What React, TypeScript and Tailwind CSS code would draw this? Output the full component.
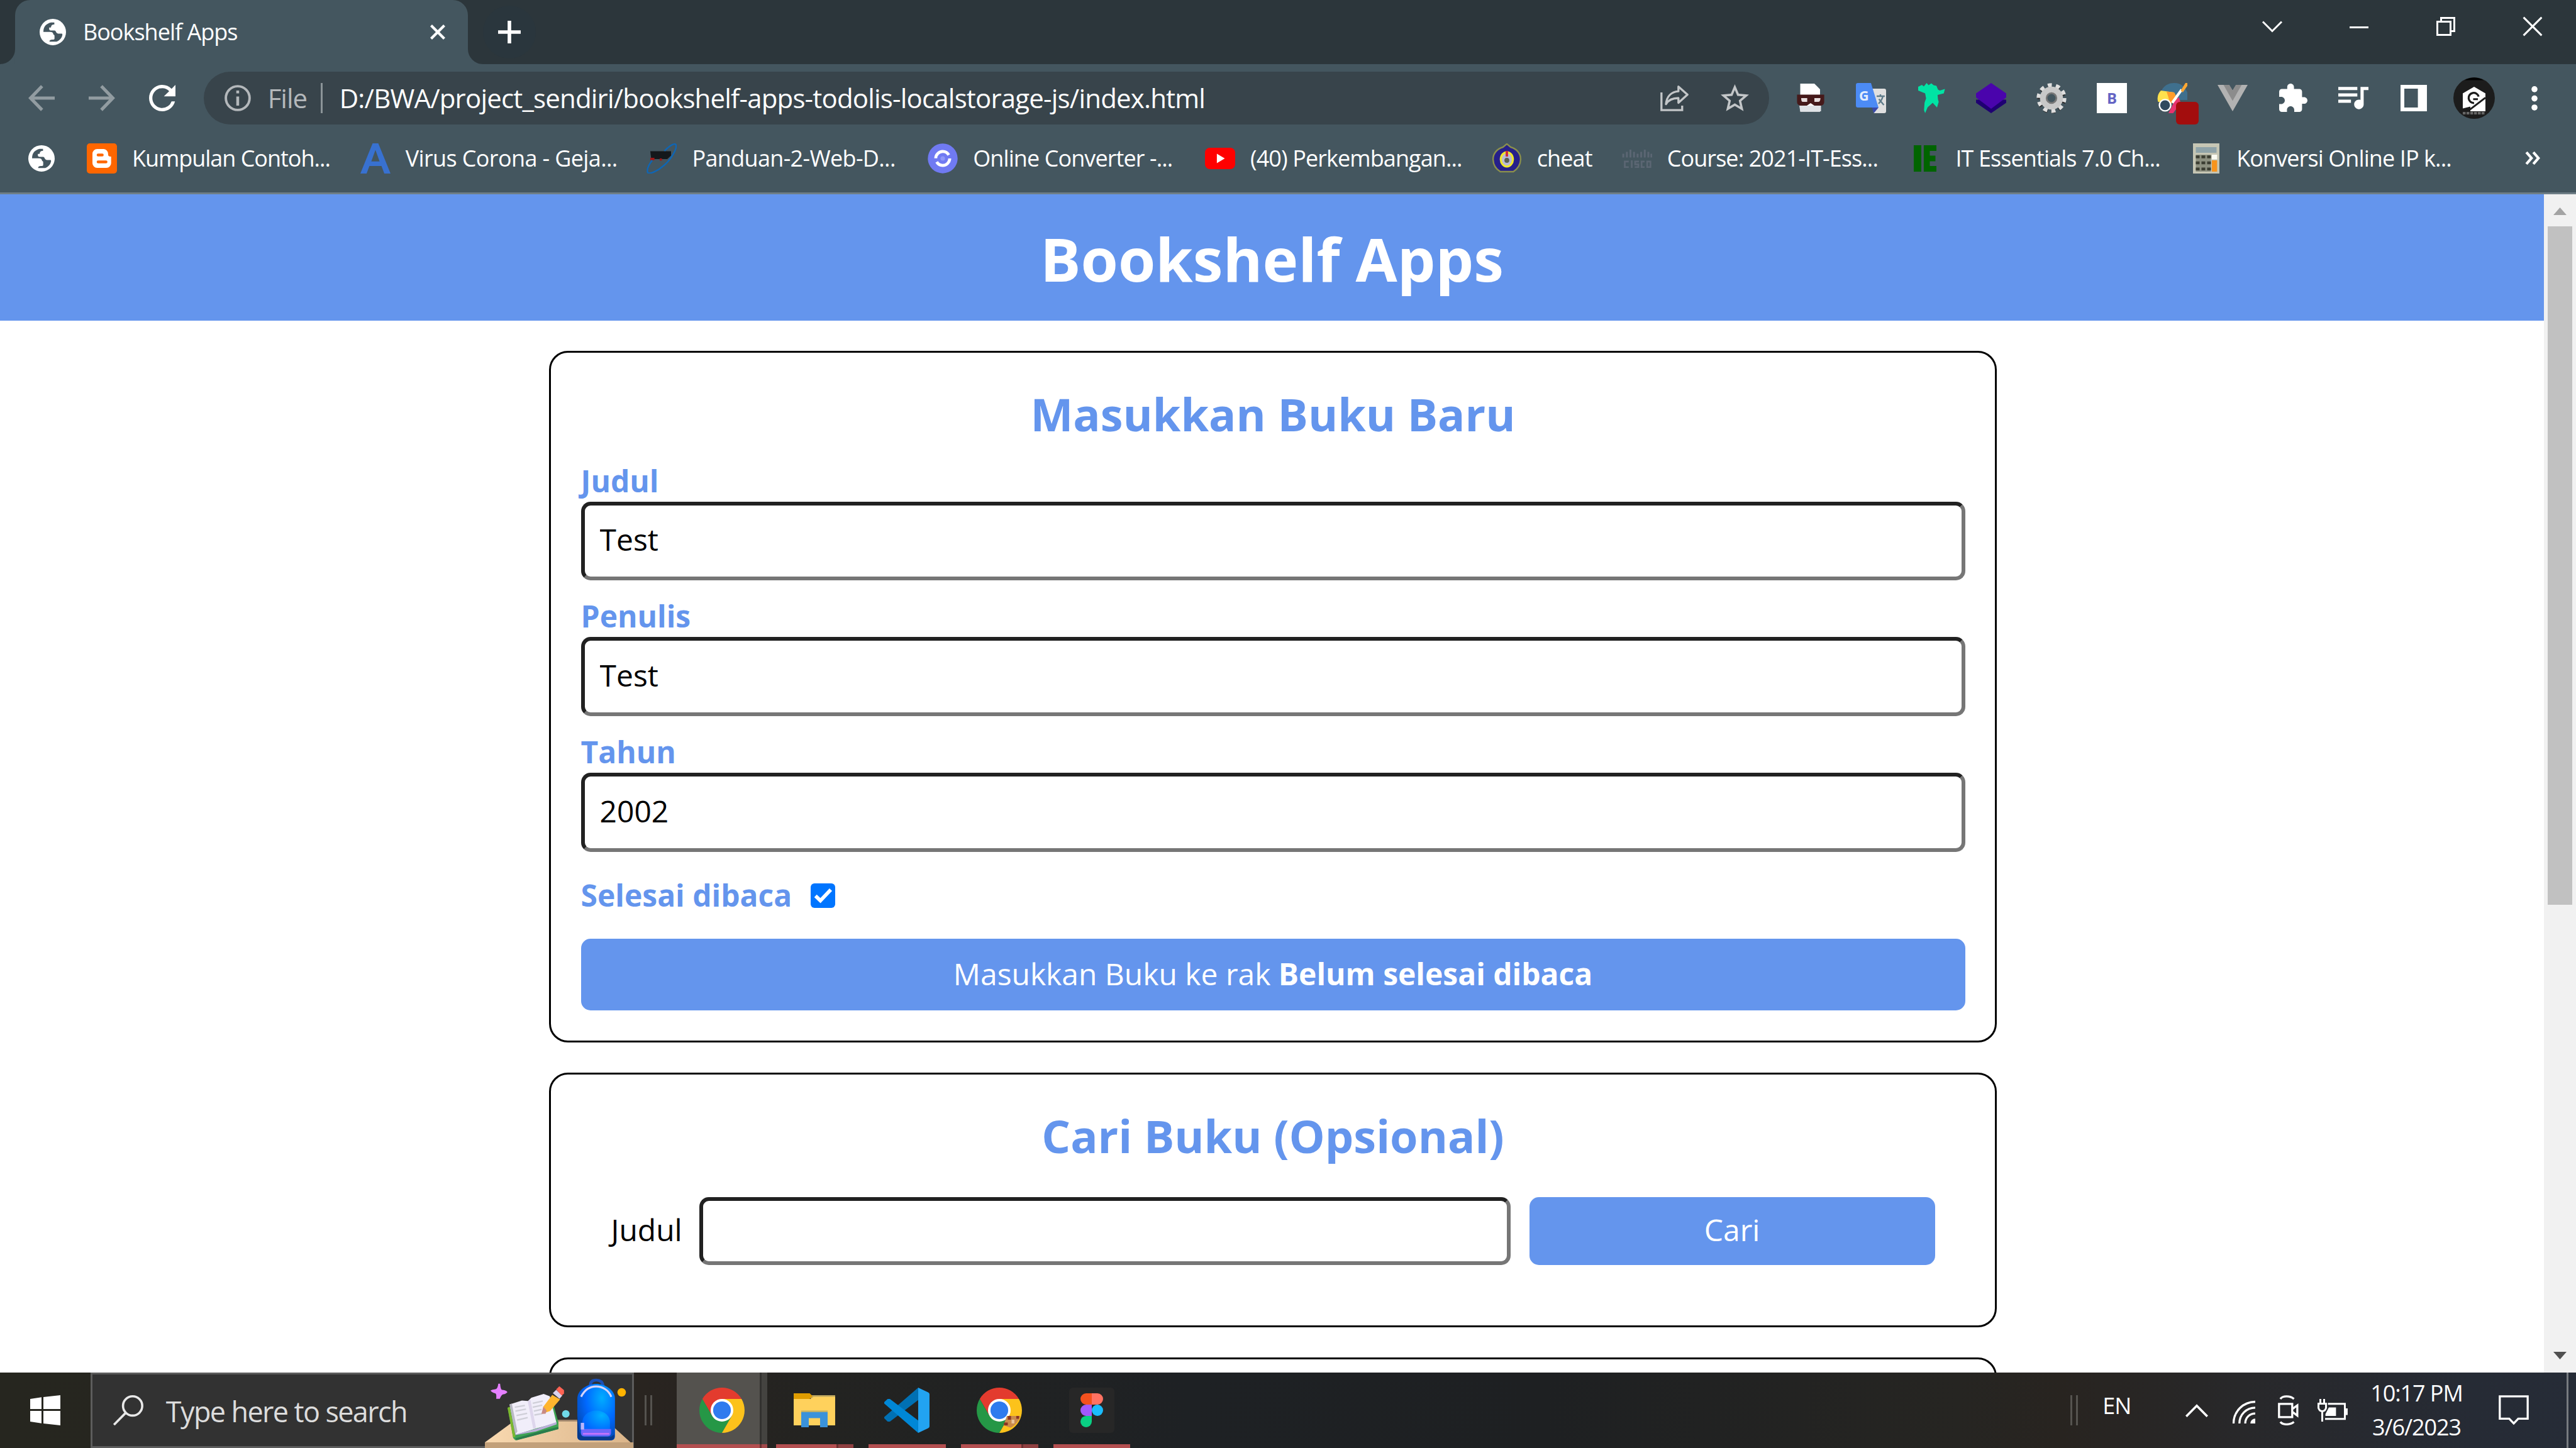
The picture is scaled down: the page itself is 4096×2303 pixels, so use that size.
import React, { ReactNode } from "react";

/* The whole desktop is laid out in rem: 1366 desktop pixels span the window, 1/16 rem each. */
const rootScale = "html{font-size:47.977px}";

function Globe() {
  return (
    <svg className="size-3.5 shrink-0" viewBox="0 0 14 14">
      <circle cx="7" cy="7" r="7" fill="#fff" />
      <path
        fill="#44565f"
        d="M7.8 1.9H6C4.8 2.2 3.8 2.8 3.1 3.5 2.4 4.3 2 5.4 2 6.9h3.6c1.1 0 1.7.5 1.7 1.4.5 0 .6.4.6.9v1.2c0 .6-.4.6-1.2.6-.9 0-1.5.3-1.5 1.1H9c1.6-.7 2.8-1.900 3.100-3.800L11.900 7.800H9.800C8.600 7.800 8.800 6.200 7.900 6.200H6.200C5 6.200 5 5.500 5.100 4.600H6C6.200 3.500 6.400 3 7.800 3z"
      />
    </svg>
  );
}

function TabStrip() {
  return (
    <div className="flex h-8.5 shrink-0 bg-[#2c363b]">
      <div className="relative ml-2 flex h-full w-60 items-center rounded-t-[0.5rem] bg-[#44565f] pr-3 pl-3.25">
        <svg className="absolute bottom-0 -left-2 size-2" viewBox="0 0 8 8">
          <path d="M8 0v8H0a8 8 0 0 0 8-8z" fill="#44565f" />
        </svg>
        <svg className="absolute -right-2 bottom-0 size-2" viewBox="0 0 8 8">
          <path d="M0 0v8h8a8 8 0 0 1-8-8z" fill="#44565f" />
        </svg>
        <Globe />
        <span className="ml-2.25 text-xs tracking-[-0.027em] whitespace-nowrap text-white">
          Bookshelf Apps
        </span>
        <svg className="ml-auto size-2" viewBox="0 0 8 8" stroke="#fff" strokeWidth="1.4">
          <path d="M.5.5l7 7M7.500.5l-7 7" />
        </svg>
      </div>
      <div className="mt-0.75 ml-2 flex size-7 items-center justify-center rounded-full bg-[#2a363d]">
        <svg className="size-3" viewBox="0 0 12 12" stroke="#fff" strokeWidth="1.9">
          <path d="M6 0v12M0 6h12" />
        </svg>
      </div>
      <div className="ml-auto flex h-7">
        <WindowButton>
          <path d="M0 2.500l5 5 5-5" />
        </WindowButton>
        <WindowButton>
          <path d="M0 5.500h10" />
        </WindowButton>
        <WindowButton>
          <path d="M.5 2.500h7v7h-7zM2.500 2.500v-2h7v7h-2" />
        </WindowButton>
        <WindowButton>
          <path d="M.2.2l9.600 9.600M9.800.2L.2 9.800" />
        </WindowButton>
      </div>
    </div>
  );
}

function WindowButton({ children }: { children: ReactNode }) {
  return (
    <div className="flex w-11.5 items-center justify-center">
      <svg className="size-2.5 overflow-visible" viewBox="0 0 10 10" fill="none" stroke="#fff" strokeWidth="1">
        {children}
      </svg>
    </div>
  );
}

function Slot({ children }: { children: ReactNode }) {
  return <div className="relative flex w-8 shrink-0 items-center justify-center">{children}</div>;
}

function Extensions() {
  return (
    <div className="ml-1.5 flex h-full items-center">
      <Slot>
        <svg className="size-4" viewBox="0 0 16 16">
          <path d="M2.500.3h7.500l3 3v12H2.500z" fill="#fff" />
          <path d="M2 12h11.500v3H2.500z" fill="#dfe2e6" />
          <path d="M.8 6.200h14.400V10c0 1.300-.8 2-2 2H10L8 10.700 6 12H3c-1.400 0-2.200-.8-2.200-2z" fill="#45191a" />
          <path d="M3 8h3.200v2H3.800C3.200 10 3 9 3 8zM10 8h3.200c0 1-.3 2-1 2H10z" fill="#e6dede" />
        </svg>
      </Slot>
      <Slot>
        <svg className="size-4" viewBox="0 0 16 16">
          <path d="M7 3h8a1 1 0 0 1 1 1v11a1 1 0 0 1-1 1H9.500z" fill="#e0e0e0" />
          <path d="M8.500 13H12l-2.500 3z" fill="#3949ab" />
          <path d="M1 0h7l4 13H1a1 1 0 0 1-1-1V1a1 1 0 0 1 1-1z" fill="#4c8bf5" />
          <path d="M11 7h4.300M13 6v1m1.300 0c-.4 1.800-1.300 3-2.300 4M12.200 8.500l2.600 3.200" fill="none" stroke="#607d8b" strokeWidth=".8" />
          <text x="1.700" y="9.300" fontSize="7.200" fontWeight="700" fill="#e4edfd" fontFamily="Open Sans">
            G
          </text>
        </svg>
      </Slot>
      <Slot>
        <svg className="size-4" viewBox="0 0 16 16" fill="#00e3a4">
          <path d="M1 2l2-1 1 .8L5.500 0l1 1.200L8 .2l1.200 1 1.500.3.800 2 1 .5 2.700-.8-.6 2.300-3.300.8.200 2.400.4 1.300-.9 3-2.300-2.500-2.700 2.400L4.700 16l-.6-1.600.3-4 .8-2.200-.5-2.700L1 4z" />
        </svg>
      </Slot>
      <Slot>
        <svg className="size-4" viewBox="0 0 16 16">
          <path d="M0 8.800h16V10.500L8 16 0 10.500z" fill="#1f0072" />
          <path d="M8 0l8 5.500v2.200L8 13.700 0 7.700V5.500z" fill="#4a04ac" />
        </svg>
      </Slot>
      <Slot>
        <svg className="size-4" viewBox="0 0 16 16">
          <circle cx="8" cy="8.700" r="6.500" fill="none" stroke="#2a2a2a" strokeWidth="2" strokeDasharray="2.040 2.040" />
          <circle cx="8" cy="8" r="6.800" fill="none" stroke="#dedede" strokeWidth="2.200" strokeDasharray="2.135 2.135" />
          <circle cx="8" cy="8" r="4.300" fill="none" stroke="#c8c8c8" strokeWidth="3.600" />
          <circle cx="8" cy="8" r="2.600" fill="none" stroke="#777" strokeWidth=".9" />
        </svg>
      </Slot>
      <Slot>
        <svg className="size-4" viewBox="0 0 16 16">
          <path d="M0 0h16v16H0z" fill="#fff" />
          <text x="8" y="11" textAnchor="middle" fontSize="8" fontWeight="700" fill="#6464c4" fontFamily="Open Sans">
            B
          </text>
        </svg>
      </Slot>
      <Slot>
        <svg className="size-4" viewBox="0 0 16 16">
          <path d="M2 5C3 1.500 6 0 9 0c4 0 6 2.500 7 5v4h-4L7 10z" fill="#3f708e" />
          <path d="M2 4l7 1 2 4-4 2-6.500-1C-.2 8 .4 5.500 2 4z" fill="#ffe14d" />
          <path d="M5 4.500L9 5l2 4-4 2z" fill="#ff9c2a" />
          <path d="M9 10l2.500-2.500 1 3-4 5.500H6z" fill="#e8336f" />
          <circle cx="4.200" cy="11.800" r="3" fill="#2f4a5e" stroke="#fff" strokeWidth=".8" />
          <path d="M8 10.500l5-7" stroke="#fff" strokeWidth="1.400" />
          <path d="M12.500 4l2.500-4h1v1.500L13.600 5z" fill="#ffa733" />
        </svg>
        <div className="absolute top-2.5 left-4.5 h-3 w-3 rounded-[0.125rem] bg-[#a30d0d]" />
      </Slot>
      <Slot>
        <svg className="h-3.5 w-4" viewBox="0 0 16 14">
          <path d="M0 0h6.200L8 3l1.800-3H16L8 14z" fill="#b2b2b2" />
          <path d="M3.200 0h3L8 3l1.800-3h3L8 8.500z" fill="#8c8c8c" />
        </svg>
      </Slot>
      <Slot>
        <svg className="size-3.75" viewBox="2 1 21 21" fill="#fff">
          <path d="M20.500 11H19V7c0-1.100-.9-2-2-2h-4V3.500C13 2.120 11.880 1 10.500 1S8 2.120 8 3.500V5H4c-1.100 0-1.990.9-1.990 2v3.800H3.500c1.490 0 2.700 1.210 2.700 2.700s-1.210 2.700-2.700 2.700H2V20c0 1.100.9 2 2 2h3.800v-1.500c0-1.490 1.210-2.700 2.700-2.700 1.490 0 2.700 1.210 2.700 2.700V22H17c1.100 0 2-.9 2-2v-4h1.500c1.380 0 2.500-1.120 2.500-2.500S21.880 11 20.500 11z" />
        </svg>
      </Slot>
      <Slot>
        <svg className="h-3 w-4" viewBox="3 6 19 14" fill="#fff">
          <path d="M15 6H3v2h12V6zm0 4H3v2h12v-2zM3 16h8v-2H3v2zM17 6v8.180c-.31-.11-.65-.18-1-.18-1.660 0-3 1.340-3 3s1.340 3 3 3 3-1.340 3-3V8h3V6h-5z" />
        </svg>
      </Slot>
      <Slot>
        <svg className="size-3.5" viewBox="0 0 14 14" fill="#fff">
          <path fillRule="evenodd" d="M0 0h14v14H0zM2 2v10h7.200V2z" />
        </svg>
      </Slot>
      <Slot>
        <svg className="size-5.5" viewBox="0 0 22 22">
          <circle cx="11" cy="11" r="11" fill="#1c1c1c" />
          <path d="M6 1.500C9-.3 13-.3 16 1.500z" fill="#000" />
          <path d="M11 5l6 3.500V18H9v-2.500l-4 1v-8z" fill="#fff" />
          <path d="M13.400 10.200A2.700 2.700 0 1 0 11 13.600" fill="none" stroke="#1c1c1c" strokeWidth="1.100" />
          <path d="M17 10.800l-8.500 6.500M10.500 11.600h2.500" stroke="#1c1c1c" strokeWidth="1" />
          <path d="M5 19h12" stroke="#666" strokeWidth="1.300" strokeDasharray="1.500 .5" />
        </svg>
      </Slot>
      <Slot>
        <svg className="h-3.5 w-1" viewBox="0 0 4 14" fill="#fff">
          <circle cx="2" cy="2.300" r="1.600" />
          <circle cx="2" cy="7.200" r="1.600" />
          <circle cx="2" cy="12" r="1.600" />
        </svg>
      </Slot>
    </div>
  );
}

function Toolbar() {
  return (
    <div className="flex h-9 shrink-0 items-center bg-[#44565f] pl-1.5">
      <Slot>
        <svg className="size-3.5" viewBox="0 0 14 14" fill="none" stroke="#929ca1" strokeWidth="1.700">
          <path d="M14 7H1.300M7.300.7L1.200 7l6.100 6.300" />
        </svg>
      </Slot>
      <Slot>
        <svg className="size-3.5" viewBox="0 0 14 14" fill="none" stroke="#929ca1" strokeWidth="1.700">
          <path d="M0 7h12.700M6.700.7L12.800 7l-6.100 6.300" />
        </svg>
      </Slot>
      <Slot>
        <svg className="size-3.5" viewBox="4 4 16 16" fill="#fff">
          <path d="M17.650 6.350A7.958 7.958 0 0 0 12 4c-4.420 0-7.990 3.580-7.990 8s3.570 8 7.990 8c3.730 0 6.840-2.550 7.730-6h-2.080A5.990 5.990 0 0 1 12 18c-3.310 0-6-2.690-6-6s2.690-6 6-6c1.660 0 3.140.69 4.220 1.780L13 11h7V4l-2.350 2.350z" />
        </svg>
      </Slot>
      <div className="ml-1.5 flex h-7 w-207.5 items-center rounded-full bg-[#38444b] pr-0.5 pl-2.75">
        <svg className="size-3.5" viewBox="0 0 14 14" fill="none" stroke="#b4b8bb" strokeWidth="1.300">
          <circle cx="7" cy="7" r="6.300" />
          <path d="M7 6.200V11M7 3v1.500" strokeWidth="1.500" />
        </svg>
        <span className="ml-2.25 w-5.5 text-sm tracking-[-0.025em] text-[#b4b8bb]">File</span>
        <div className="ml-1.5 h-4 w-0.25 bg-[#8b9498]" />
        <span className="ml-2.25 text-sm tracking-[-0.019em] whitespace-nowrap text-white">
          D:/BWA/project_sendiri/bookshelf-apps-todolis-localstorage-js/index.html
        </span>
        <div className="ml-auto flex">
          <Slot>
            <svg className="h-3.5 w-3.75" viewBox="0 0 15 14" fill="none" stroke="#c3c6c8" strokeWidth="1.100">
              <path d="M.6 4v9.400h11V11" />
              <path strokeLinejoin="round" d="M9.600.9l4.800 4.300-4.800 4.300V7C6.400 7 4.400 7.800 3 10.200 3.400 6.200 5.800 3.700 9.600 3.400z" />
            </svg>
          </Slot>
          <Slot>
            <svg className="size-3.75" viewBox="2 2 20 19" fill="#c3c6c8">
              <path d="M22 9.240l-7.190-.62L12 2 9.190 8.630 2 9.240l5.460 4.730L5.820 21 12 17.270 18.180 21l-1.630-7.030L22 9.240zM12 15.400l-3.760 2.270 1-4.280-3.320-2.880 4.380-.38L12 6.100l1.710 4.040 4.380.38-3.320 2.880 1 4.280L12 15.400z" />
            </svg>
          </Slot>
        </div>
      </div>
      <Extensions />
    </div>
  );
}

function Bookmark({
  icon,
  label,
  width,
  tracking = "tracking-[-0.025em]",
}: {
  icon: ReactNode;
  label: string;
  width: string;
  tracking?: string;
}) {
  return (
    <div className={"flex shrink-0 items-center gap-2 " + width}>
      <svg className="size-4 shrink-0" viewBox="0 0 16 16">
        {icon}
      </svg>
      <span className={"text-xs whitespace-nowrap text-white " + tracking}>{label}</span>
    </div>
  );
}

function BookmarksBar() {
  return (
    <div className="flex h-8.25 shrink-0 items-center border-b-[3px] border-[#6f7e86] bg-[#44565f] pb-1 pl-3.75">
      <div className="w-7.75">
        <Globe />
      </div>
      <Bookmark
        width="w-36.25"
        label="Kumpulan Contoh..."
        tracking="tracking-[-0.028em]"
        icon={
          <>
            <rect width="16" height="16" rx="1.600" fill="#ff6600" />
            <path
              fillRule="evenodd"
              fill="#fff"
              d="M5.500 3H9a2.500 2.500 0 0 1 2.300 2.500c0 1.200.3 1.500 1.600 1.500v3.500A2.500 2.500 0 0 1 10.400 13H5.500A2.500 2.500 0 0 1 3 10.500v-5A2.500 2.500 0 0 1 5.500 3zM6 5.400a.75.75 0 0 0 0 1.500h2.200a.75.75 0 0 0 0-1.500zm0 3.700a.75.75 0 0 0 0 1.500h4.200a.75.75 0 0 0 0-1.500z"
            />
          </>
        }
      />
      <Bookmark
        width="w-38"
        label="Virus Corona - Geja..."
        tracking="tracking-[-0.017em]"
        icon={<path fillRule="evenodd" fill="#3871d0" d="M6.500 0h3L16 16h-3.300l-1.500-4H4.800l-1.500 4H0zM8 3.500L5.800 9.600h4.400z" />}
      />
      <Bookmark
        width="w-37.25"
        label="Panduan-2-Web-D..."
        tracking="tracking-[-0.018em]"
        icon={
          <>
            <path d="M2 4.200h11v2.300L11 8.300H2.500z" fill="#14181b" />
            <path d="M2 8.300h2.200M7 8.600h1.200" stroke="#a01818" strokeWidth="1.200" />
            <path d="M9.500 4C12 1.500 14.500-.2 15.500.6c1 1.700-2 7.400-6 10.900C6.300 14.400 1.600 16.800.6 15.400c-.4-1.500.5-4 2.400-6.400" fill="none" stroke="#0f66b5" strokeWidth=".8" />
          </>
        }
      />
      <Bookmark
        width="w-36.75"
        label="Online Converter -..."
        icon={
          <>
            <circle cx="8" cy="8" r="7.900" fill="#707af2" />
            <circle cx="8" cy="8" r="3.700" fill="none" stroke="#fff" strokeWidth="1.600" strokeDasharray="9.600 2" />
            <circle cx="8" cy="8" r="1.200" fill="#8f98f8" />
          </>
        }
      />
      <Bookmark
        width="w-38"
        label="(40) Perkembangan..."
        icon={
          <>
            <rect y="2.300" width="16" height="11.400" rx="2.600" fill="#f00" />
            <path d="M6.300 5.500v5L10.500 8z" fill="#fff" />
          </>
        }
      />
      <Bookmark
        width="w-17.25"
        label="cheat"
        icon={
          <>
            <path d="M8 .3L10 2c3 .8 5.300 3.200 5.300 6.300 0 2.800-1.300 5-3.800 6.700h-7C2 13.500.7 11 .7 8.300.7 5.200 3 2.800 6 2z" fill="#26208a" stroke="#8a8f4c" strokeWidth=".8" />
            <ellipse cx="8" cy="8.500" rx="3.200" ry="3.800" fill="#b9b9d6" stroke="#f0e72c" strokeWidth="1.100" />
            <path d="M8 4v3" stroke="#d02a3a" strokeWidth="1.300" />
            <circle cx="8" cy="9" r="1.300" fill="#5a5f50" />
          </>
        }
      />
      <Bookmark
        width="w-38.25"
        label="Course: 2021-IT-Ess..."
        icon={
          <>
            <path d="M.7 5.500v2M2.600 4.500v3M4.500 3.300v4.200M6.400 4.500v3M8.300 5.500v2M10.200 4.500v3M12.100 3.300v4.200M14 4.500v3M15.600 5.500v2" stroke="#5b6673" strokeWidth="1" />
            <path d="M3.600 9.600H1.500v3h2.100M5.200 9v4M9 9.600H7v1.500h1.700v1.500H6.800M12 9.600h-1.600v3H12M13.400 9.600h1.700v3h-1.700z" fill="none" stroke="#5b6673" strokeWidth=".9" />
          </>
        }
      />
      <Bookmark
        width="w-37.25"
        label="IT Essentials 7.0 Ch..."
        icon={<path fill="#006400" d="M2 1h4v14H2zM7.300 1H14v3h-3.500v2.500h3v3h-3V12H14v3H7.300z" />}
      />
      <Bookmark
        width="w-40"
        label="Konversi Online IP k..."
        icon={
          <>
            <path d="M1 0h14v16H1z" fill="#c6c6b4" />
            <path d="M2.500 2h11v3h-11z" fill="#8fa3a8" />
            <path d="M2.500 6h8v9h-8z" fill="#8d9080" />
            <path d="M2.500 7.200h8M2.500 10.300h8M2.500 13.600h8" stroke="#3c3e33" strokeWidth="1.500" strokeDasharray="2 1" />
            <path d="M11 6h2.800v2.500H11z" fill="#fbfbf2" />
            <path d="M11 9h2.800v6H11z" fill="#f7941d" />
          </>
        }
      />
      <svg className="ml-4.25 h-1.75 w-2" viewBox="0 0 8 7" fill="none" stroke="#fff" strokeWidth="1.400">
        <path d="M.7.4l2.700 3.100L.7 6.600M4.400.4l2.700 3.100-2.700 3.100" />
      </svg>
    </div>
  );
}

const fieldBorder = "rounded-[0.3125rem] border-[6px] border-[#767676] border-t-[#212121] border-l-[#212121] bg-white text-black";

function Field({ label, value }: { label: string; value: string }) {
  return (
    <div className="mt-2 flex flex-col">
      <label className="text-base leading-5.5 font-bold text-[#6495ed]">{label}</label>
      <input readOnly value={value} className={"h-10.5 w-full px-2 pb-0.5 text-base outline-none " + fieldBorder} />
    </div>
  );
}

function Card({ children }: { children: ReactNode }) {
  return <section className="rounded-[0.625rem] border-[3px] border-black p-4">{children}</section>;
}

function CardTitle({ children }: { children: ReactNode }) {
  return <h2 className="text-center text-2xl leading-8.25 font-bold text-[#6495ed]">{children}</h2>;
}

function Page() {
  return (
    <div className="flex min-h-0 flex-1 bg-white">
      <div className="min-w-0 flex-1 overflow-hidden">
        <header className="flex h-16.75 items-center justify-center bg-[#6495ed] pt-0.25">
          <h1 className="text-[2rem] leading-none font-bold text-white">Bookshelf Apps</h1>
        </header>
        <main className="ml-72.75 flex w-192 flex-col gap-4 pt-4">
          <Card>
            <CardTitle>Masukkan Buku Baru</CardTitle>
            <Field label="Judul" value="Test" />
            <Field label="Penulis" value="Test" />
            <Field label="Tahun" value="2002" />
            <div className="mt-3 flex h-5.5 items-center">
              <span className="text-base font-bold text-[#6495ed]">Selesai dibaca</span>
              <div className="ml-2.5 flex size-3.25 items-center justify-center rounded-[0.125rem] bg-[#0075ff]">
                <svg className="size-2.5" viewBox="0 0 10 10" fill="none" stroke="#fff" strokeWidth="1.900">
                  <path d="M.9 5.300l2.600 2.500L9 2" />
                </svg>
              </div>
            </div>
            <button className="mt-3 flex h-9.5 w-full items-center justify-center rounded-[0.3125rem] bg-[#6495ed] pb-0.25 text-base whitespace-pre text-white">
              Masukkan Buku ke rak <b className="font-bold">Belum selesai dibaca</b>
            </button>
          </Card>
          <Card>
            <CardTitle>Cari Buku (Opsional)</CardTitle>
            <div className="flex h-17 items-center p-4">
              <label className="w-11.75 pb-0.25 text-base text-black">Judul</label>
              <input readOnly value="" className={"h-9 w-107.5 outline-none " + fieldBorder} />
              <button className="ml-2.5 h-9 flex-1 rounded-[0.3125rem] bg-[#6495ed] pb-0.25 text-base text-white">Cari</button>
            </div>
          </Card>
          <Card>
            <div className="h-20" />
          </Card>
        </main>
      </div>
      <div className="flex w-4.25 flex-col items-center justify-between bg-[#f1f1f1]">
        <svg className="mt-1.75 h-1 w-1.75" viewBox="0 0 7 4" fill="#a3a3a3">
          <path d="M3.500 0L7 4H0z" />
        </svg>
        <div className="mt-1.5 mb-auto h-90 w-3.25 bg-[#c1c1c1]" />
        <svg className="mb-1.75 h-1 w-1.75" viewBox="0 0 7 4" fill="#505050">
          <path d="M3.500 4L7 0H0z" />
        </svg>
      </div>
    </div>
  );
}

function SearchArt() {
  return (
    <svg className="-mr-0.25 -mb-0.25 ml-auto h-9.75 w-19.75 self-end" viewBox="47 32 1333 658" preserveAspectRatio="none">
      <defs>
        <linearGradient id="desk" x1="0" x2="1">
          <stop offset="0" stopColor="#f9d9b0" />
          <stop offset="1" stopColor="#dbb58a" />
        </linearGradient>
        <radialGradient id="bag" cx=".65" cy=".25" r=".7">
          <stop offset="0" stopColor="#00adff" />
          <stop offset=".6" stopColor="#0069ff" />
          <stop offset="1" stopColor="#0350c4" />
        </radialGradient>
        <radialGradient id="pocket" cx=".7" cy=".2" r=".7">
          <stop offset="0" stopColor="#00b0ff" />
          <stop offset="1" stopColor="#0066ff" />
        </radialGradient>
      </defs>
      <path d="M47 640L320 440H1130L1350 640z" fill="url(#desk)" />
      <path d="M680 437h200v16H680z" fill="#9c8269" />
      <path d="M47 640H1380v50H47z" fill="#c2a07a" />
      <path d="M183 115q5 55 18 55 45 5 47 22-12 14-40 18-14 5-28 40h-32q5-40-6-48-40-10-44-26 14-10 44-12 20-4 25-49z" fill="#e580ff" />
      <path d="M250 330L300 600l20 22 385-100V460L660 300z" fill="#3da253" />
      <path d="M250 330l20-10 50 270-20 5z" fill="#7db82e" />
      <path d="M318 605l240-70 147-35v20L580 555 330 622z" fill="#2a7d4c" />
      <path d="M268 300l110-35 55 5 30-30 110-33 55 20 60 240-170 45-195 60z" fill="#f1eefa" />
      <path d="M318 570l185-50 185-62v22l-185 62-185 33z" fill="#b9aed8" />
      <path d="M268 300l20-8 50 250-20 28z" fill="#b9b9c4" />
      <path d="M430 270l25-10 50 250-25 12z" fill="#ded6ec" />
      <g stroke="#cfcfd8" strokeWidth="13">
        <path d="M315 325l90-15M320 360l95-18M330 400l95-20M335 440l95-22M475 290l90-20M475 325l85-18M485 360l70-15M490 395l70-12" />
      </g>
      <path d="M570 320l80-105 70 40-90 105-60 20z" fill="#ffb52e" />
      <path d="M570 320l30 35-10 28-37 2z" fill="#c98a83" />
      <path d="M655 200l30-30 55 50-25 30z" fill="#d9d3ee" />
      <path d="M685 165l28-27 42 35v30l-22 18z" fill="#ff6354" />
      <circle cx="771" cy="385" r="34" fill="#70dbea" />
      <path d="M990 135q0-52 53-52t63 52" fill="none" stroke="#1a4fb4" strokeWidth="26" />
      <path d="M874 250c0-80 90-133 168-133s169 53 169 133v335q0 37-40 37H914q-40 0-40-37z" fill="url(#bag)" />
      <path d="M874 400l20 150 30 40h250l30-20v25q-4 27-34 27H914q-40 0-40-37z" fill="#083b8c" />
      <path d="M908 232c30-60 80-92 135-92s110 30 135 92" fill="none" stroke="#d5d4fa" strokeWidth="18" />
      <path d="M920 570V460c0-60 55-104 123-104s123 44 123 104v110z" fill="url(#pocket)" />
      <path d="M908 520h268v40q-5 26-30 26H938q-30 0-30-26z" fill="#6d67fa" />
      <path d="M925 555h235v16H925z" fill="#c173fb" />
      <path d="M905 465h30v60h-30z" fill="#b9b4fb" />
      <circle cx="1271" cy="192" r="38" fill="#ffb300" />
    </svg>
  );
}

function ChromeLogo({ badge = false }: { badge?: boolean }) {
  return (
    <svg className="size-6" viewBox="0 0 24 24">
      <path d="M22.390 6A12 12 0 0 0 1.610 6L6.800 15 12 12V6z" fill="#e33b2e" />
      <path d="M1.610 6A12 12 0 0 0 12 24l5.200-9L12 12l-5.200 3z" fill="#259746" />
      <path d="M12 24A12 12 0 0 0 22.390 6H12v6l5.200 3z" fill="#fcc21b" />
      <circle cx="12" cy="12" r="6" fill="#fff" />
      <circle cx="12" cy="12" r="4.700" fill="#2f7bee" />
      {badge && (
        <>
          <path d="M16 15h7c0 2-2.500 5-5 6.300L14.300 20z" fill="#c98a4b" />
          <path d="M16.500 15h1.700v2h-1.700zM21 15h1.500v1.500H21zM14.500 18.500h2v1.500h-2z" fill="#8a3422" />
          <path d="M18.500 17h1.500v2h-1.500z" fill="#e8c49a" />
        </>
      )}
    </svg>
  );
}

function TaskApp({ children, split = false }: { children: ReactNode; split?: boolean }) {
  return (
    <div className="ml-0.25 flex w-12 flex-col">
      <div className="flex flex-1 items-center justify-center pt-0.5">{children}</div>
      <div className="mx-auto flex h-0.5 w-10.25 bg-[#b34f50]">
        {split && <div className="ml-auto w-2.25 border-l-[3px] border-[#6c3131] bg-[#8f4041]" />}
      </div>
    </div>
  );
}

function Grip() {
  return <div className="h-4 w-1 shrink-0 border-x-[3px] border-[#55534f]" />;
}

function Taskbar() {
  return (
    <div className="flex h-10 shrink-0 items-center bg-[linear-gradient(90deg,#26261f_0%,#26241f_20%,#292420_25%,#232321_32%,#1e2124_46%,#1e2022_60%,#262522_76%,#282420_80%,#28282a_87%,#262b35_96%,#262c37_100%)]">
      <div className="flex w-12 justify-center">
        <svg className="size-4" viewBox="0 0 16 16" fill="#fff">
          <path d="M0 2L6 1.100V7.300H0zM7 1l9-1v7.300H7zM0 8.300h6v6.600L0 14zM7 8.300h9V16l-9-1z" />
        </svg>
      </div>
      <div className="flex h-full w-72 items-center border-[3px] border-[#5c5c5c] bg-[#323232] pl-2.75">
        <svg className="size-4" viewBox="0 0 16 16" fill="none" stroke="#e8e8e8" strokeWidth="1.200">
          <circle cx="10.300" cy="5.700" r="5.100" />
          <path d="M6.700 9.300L.4 15.700" />
        </svg>
        <span className="mt-0.25 ml-3 text-[0.9375rem] tracking-[-0.036em] whitespace-nowrap text-[#dcdcdc]">Type here to search</span>
        <SearchArt />
      </div>
      <div className="ml-1.5 flex">
        <Grip />
      </div>
      <div className="ml-3.25 flex h-full">
        <div className="flex w-12 flex-col">
          <div className="flex flex-1">
            <div className="flex w-11 items-center justify-center bg-[#54524e] pt-0.5 pl-1">
              <ChromeLogo />
            </div>
            <div className="flex-1 border-l-[3px] border-[#32312f] bg-[#444340]" />
          </div>
          <div className="flex h-0.5 bg-[#b34f50]">
            <div className="ml-auto w-1 border-l-[3px] border-[#6c3131] bg-[#a0484a]" />
          </div>
        </div>
        <TaskApp split>
          <svg className="h-4.5 w-5.5" viewBox="0 0 22 18">
            <path d="M9 1h13v3H9z" fill="#bda65f" />
            <path d="M0 3h9l1.500-1.200H22V17H0z" fill="#ffd15c" />
            <path d="M0 0h8.500L10 1.500 8.500 3H0z" fill="#df9c00" />
            <path d="M4 9.200h14v1H4z" fill="#bdb069" />
            <path d="M4 10h14v8h-4v-4.800H8V18H4z" fill="#3a92da" />
          </svg>
        </TaskApp>
        <TaskApp>
          <svg className="size-6" viewBox="0 0 24 24">
            <path d="M18 0v6.600L3 18H1.800L0 16.300v-.7z" fill="#0070b3" />
            <path d="M18 24v-6.600L3 6H1.800L0 7.700v.7z" fill="#0087d6" />
            <path d="M18 0l5.300 2.500q.7.300.7 1v17q0 .7-.7 1L18 24z" fill="#22a3f1" />
          </svg>
        </TaskApp>
        <TaskApp split>
          <ChromeLogo badge />
        </TaskApp>
        <TaskApp>
          <div className="flex size-6 items-center justify-center rounded-[0.125rem] bg-[#272727]">
            <svg className="h-4.5 w-3" viewBox="0 0 12 18">
              <path d="M6 0v6H3a3 3 0 0 1 0-6z" fill="#f4511e" />
              <path d="M6 0h3a3 3 0 0 1 0 6H6z" fill="#ff7262" />
              <path d="M6 6v6H3a3 3 0 0 1 0-6z" fill="#a259ff" />
              <circle cx="9" cy="9" r="3" fill="#1abcfe" />
              <path d="M6 12v3a3 3 0 1 1-3-3z" fill="#0acf83" />
            </svg>
          </div>
        </TaskApp>
      </div>
      <div className="ml-auto flex h-full w-67 shrink-0 items-center text-xs text-white">
        <Grip />
        <span className="mb-1.25 ml-3.25 w-3.75 tracking-[-0.03em]">EN</span>
        <svg className="ml-7.25 h-1.75 w-3" viewBox="0 0 12 7" fill="none" stroke="#fff" strokeWidth="1.200">
          <path d="M.4 6.600L6 .9l5.600 5.700" />
        </svg>
        <svg className="mt-0.5 ml-3.25 size-3 overflow-visible" viewBox="0 0 12 12" fill="none" stroke="#fff" strokeWidth="1.100">
          <path d="M.5 12C.5 5.600 5.600.5 12 .5M3.600 12C3.600 7.300 7.300 3.600 12 3.600M6.700 12c0-3 2.300-5.300 5.300-5.300" />
          <path d="M12 9.400V12H9.400A2.600 2.600 0 0 1 12 9.400z" fill="#fff" stroke="none" />
        </svg>
        <svg className="ml-3 h-4 w-2.75" viewBox="0 0 11 16" fill="none" stroke="#fff" strokeWidth="1.100">
          <path d="M.6 4.600h7v7h-7zM7.600 7.400l2.700-2v5.400l-2.700-2M1.300 2C2.500.2 6.500.2 8.500 2M1.300 14.200c1.200 1.700 5.200 1.700 7.200 0" />
        </svg>
        <svg className="ml-2.5 h-3 w-4" viewBox="0 0 16 12" fill="none" stroke="#fff">
          <path d="M5.500 2.600h9v8H4M15.500 5v3.500" />
          <path d="M6 4.500h3.800V9H4.200V8z" fill="#fff" stroke="none" />
          <path d="M.5 2.500h4v2.300q-.5 1.700-2 1.700t-2-1.700zM1.500 0v2.500M3.500 0v2.500M2.500 6.500V12" />
        </svg>
        <div className="ml-3.25 flex w-11.75 flex-col items-center leading-4.5 tracking-[-0.03em] whitespace-nowrap">
          <span>10:17 PM</span>
          <span>3/6/2023</span>
        </div>
        <svg className="ml-5 size-4" viewBox="0 0 16 16" fill="none" stroke="#fff" strokeWidth="1.100">
          <path d="M.6.6h14.800v11.900h-5L8 15l-2.400-2.500h-5z" />
        </svg>
        <div className="ml-5 h-full w-0.25 bg-[#777b80]" />
      </div>
    </div>
  );
}

export default function App() {
  return (
    <div className="flex h-screen w-screen flex-col overflow-hidden font-['Open_Sans','Noto_Sans',sans-serif]">
      <style>{rootScale}</style>
      <TabStrip />
      <Toolbar />
      <BookmarksBar />
      <Page />
      <Taskbar />
    </div>
  );
}
